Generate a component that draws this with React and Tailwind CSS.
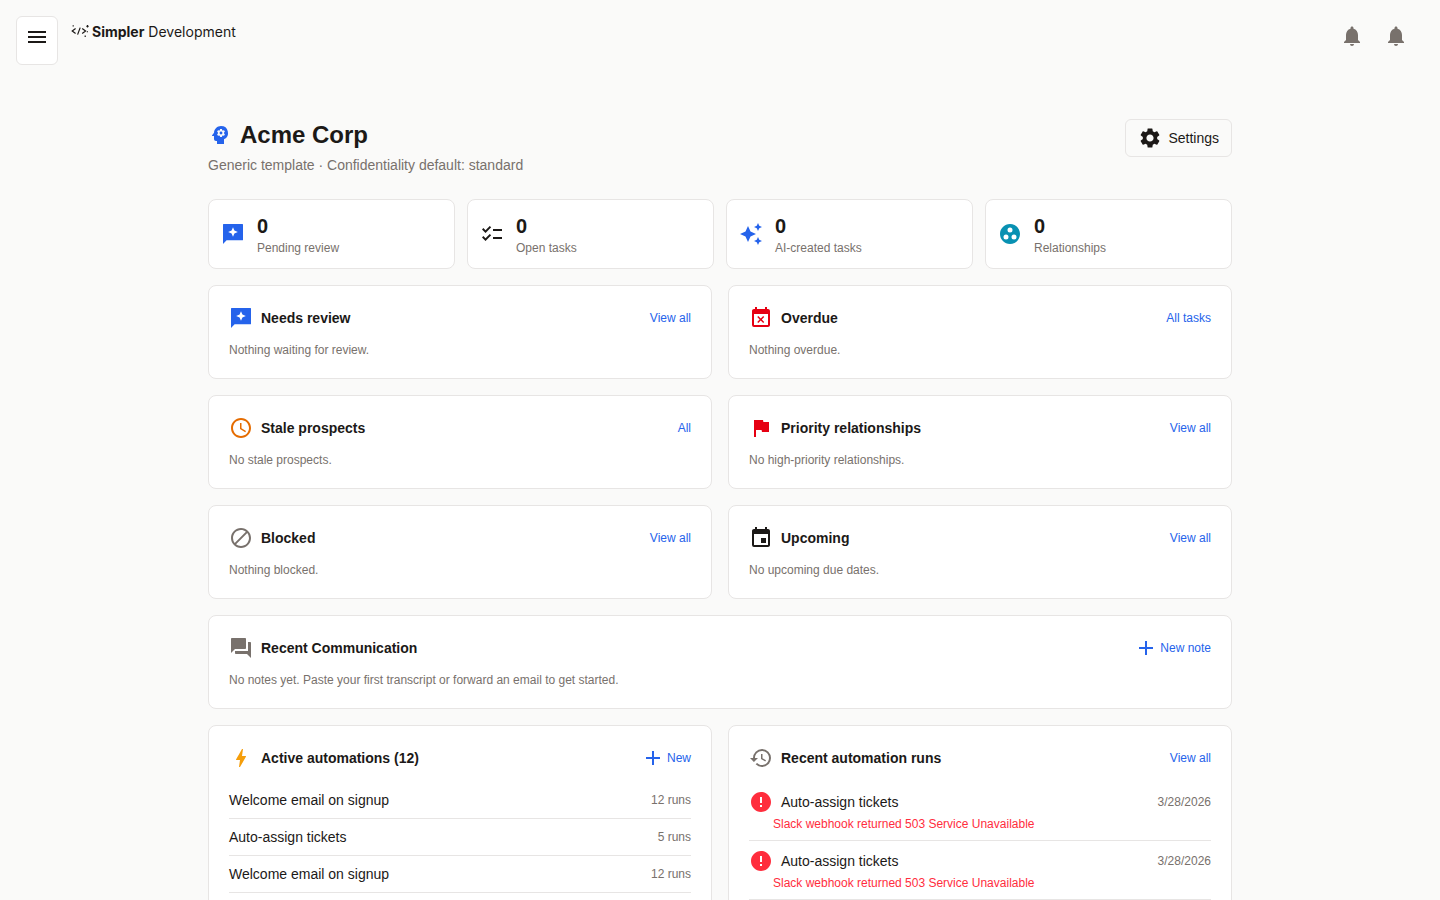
import React from "react";
import {
  MdMenu, MdNotifications, MdSettings, MdPsychology, MdAutoAwesome, MdChecklist, MdGroupWork,
  MdEventBusy, MdAccessTime, MdFlag, MdBlock, MdEvent, MdForum, MdAdd, MdBolt, MdHistory, MdError,
} from "react-icons/md";

const Review = ({ size = 24, className = "" }) => (
  <svg width={size} height={size} viewBox="0 0 24 24" fill="currentColor" className={className}>
    <path fillRule="evenodd" d="M2.6 2h18.8a.6.6 0 0 1 .6.6v15.1a.6.6 0 0 1-.6.6H5.6L2 22V2.6a.6.6 0 0 1 .6-.6zM12 5.2l-1.4 3.4-3.4 1.4 3.4 1.4 1.4 3.4 1.4-3.4 3.4-1.4-3.4-1.4z" />
  </svg>
);

const Logo = () => (
  <svg width="18" height="14" viewBox="0 0 18 14" fill="none" stroke="#1c1917" strokeWidth="1.2" className="shrink-0">
    <path d="M4.6 4.4 1.2 7 4.6 9.6M9.2 3.6 6.6 10.6M11.2 4.4 14.6 7 11.2 9.6" />
    <path d="M1.6 1.8h1.2M16.5 1v2.6M15.4 2.3h2.2M14.2 11.6v1.4M16.4 7.2v1" />
  </svg>
);

function Stat({ icon, label }) {
  return (
    <div className="flex h-[70px] items-center gap-3 rounded-lg border border-[#e7e5e4] bg-white px-3">
      {icon}
      <div className="flex flex-col gap-[1px] pt-[3px]">
        <span className="text-[20px] leading-[24px] font-semibold text-[#1c1917]">0</span>
        <span className="text-[12px] leading-[18px] text-[#78716c]">{label}</span>
      </div>
    </div>
  );
}

function CardHead({ icon, title, link, plus }) {
  return (
    <div className="flex h-6 items-center">
      <span className="flex w-6 justify-center">{icon}</span>
      <h3 className="ml-2 flex-1 text-[14px] font-bold text-[#1c1917]">{title}</h3>
      <a className="flex items-center gap-0.5 text-[12px] text-[#2563eb]">
        {plus && <MdAdd size={24} />}
        {link}
      </a>
    </div>
  );
}

function Card({ icon, title, link, text, plus }) {
  return (
    <section className="h-[94px] rounded-lg border border-[#e7e5e4] bg-white px-5 pt-5">
      <CardHead icon={icon} title={title} link={link} plus={plus} />
      <p className="mt-[11px] text-[12px] leading-[18px] text-[#78716c]">{text}</p>
    </section>
  );
}

const Rule = ({ name, runs }) => (
  <div className="flex h-[37px] items-center justify-between border-b border-[#e7e5e4]">
    <span className="text-[14px] text-[#1c1917]">{name}</span>
    <span className="text-[12px] text-[#78716c]">{runs}</span>
  </div>
);

const Run = () => (
  <div className="h-[59px] border-b border-[#e7e5e4] pt-2">
    <div className="flex h-6 items-center">
      <span className="flex w-6 justify-center text-[#ff2d3d]"><MdError size={24} /></span>
      <span className="ml-2 flex-1 text-[14px] text-[#1c1917]">Auto-assign tickets</span>
      <span className="text-[12px] text-[#78716c]">3/28/2026</span>
    </div>
    <p className="mt-[1px] ml-6 text-[12px] leading-[18px] text-[#ff2d3d]">Slack webhook returned 503 Service Unavailable</p>
  </div>
);

export default function App() {
  return (
    <div className="h-screen overflow-hidden bg-[#fafaf9] font-['Liberation_Sans',Arial,sans-serif] text-[#1c1917]">
      <header className="flex items-start justify-between pt-4 pr-[32px] pl-4">
        <div className="flex items-start gap-[13px]">
          <button className="flex h-[49px] w-[42px] items-start justify-center rounded-md border border-[#e7e5e4] bg-white pt-2">
            <MdMenu size={24} />
          </button>
          <div className="flex h-[30px] items-center gap-[3px] font-['Inter',sans-serif] text-[14px]">
            <Logo />
            <span><b className="font-bold">Simpler</b> Development</span>
          </div>
        </div>
        <div className="flex gap-5 pt-2 text-[#78716c]">
          <MdNotifications size={24} />
          <MdNotifications size={24} />
        </div>
      </header>

      <main className="mx-auto mt-[54px] w-[1024px]">
        <div className="flex items-start justify-between">
          <div>
            <div className="flex h-8 items-center gap-2">
              <span className="flex w-6 justify-center text-[#2563eb]"><MdPsychology size={24} /></span>
              <h1 className="text-[24px] font-bold text-[#1c1917]">Acme Corp</h1>
            </div>
            <p className="mt-[2px] text-[14px] leading-[24px] text-[#78716c]">Generic template · Confidentiality default: standard</p>
          </div>
          <button className="flex h-[38px] items-center gap-1.5 rounded-md border border-[#e7e5e4] px-3 text-[14px]">
            <MdSettings size={24} />
            Settings
          </button>
        </div>

        <div className="mt-[22px] grid grid-cols-4 gap-3">
          <Stat icon={<Review className="text-[#2563eb]" />} label="Pending review" />
          <Stat icon={<MdChecklist size={24} />} label="Open tasks" />
          <Stat icon={<MdAutoAwesome size={24} className="text-[#2563eb]" />} label="AI-created tasks" />
          <Stat icon={<MdGroupWork size={24} className="text-[#0891b2]" />} label="Relationships" />
        </div>

        <div className="mt-4 grid grid-cols-2 gap-4">
          <Card icon={<Review className="text-[#2563eb]" />} title="Needs review" link="View all" text="Nothing waiting for review." />
          <Card icon={<MdEventBusy size={24} className="text-[#e60012]" />} title="Overdue" link="All tasks" text="Nothing overdue." />
          <Card icon={<MdAccessTime size={24} className="text-[#e56c00]" />} title="Stale prospects" link="All" text="No stale prospects." />
          <Card icon={<MdFlag size={24} className="text-[#e60012]" />} title="Priority relationships" link="View all" text="No high-priority relationships." />
          <Card icon={<MdBlock size={24} className="text-[#78716c]" />} title="Blocked" link="View all" text="Nothing blocked." />
          <Card icon={<MdEvent size={24} />} title="Upcoming" link="View all" text="No upcoming due dates." />
          <div className="col-span-2">
            <Card icon={<MdForum size={24} className="text-[#78716c]" />} title="Recent Communication" link="New note" plus text="No notes yet. Paste your first transcript or forward an email to get started." />
          </div>
          <section className="h-[300px] rounded-lg border border-[#e7e5e4] bg-white px-5 pt-5">
            <CardHead icon={<MdBolt size={24} className="text-[#f59e0b]" />} title="Active automations (12)" link="New" plus />
            <div className="mt-3">
              <Rule name="Welcome email on signup" runs="12 runs" />
              <Rule name="Auto-assign tickets" runs="5 runs" />
              <Rule name="Welcome email on signup" runs="12 runs" />
            </div>
          </section>
          <section className="h-[300px] rounded-lg border border-[#e7e5e4] bg-white px-5 pt-5">
            <CardHead icon={<MdHistory size={24} className="text-[#78716c]" />} title="Recent automation runs" link="View all" />
            <div className="mt-3">
              <Run />
              <Run />
            </div>
          </section>
        </div>
      </main>
    </div>
  );
}
